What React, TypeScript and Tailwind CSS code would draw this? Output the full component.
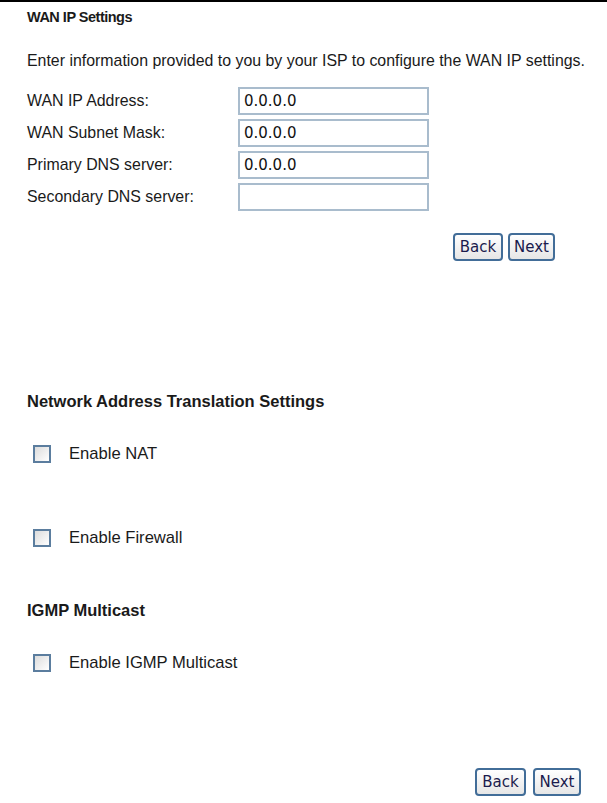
import React from 'react';

const fields = [
  { label: 'WAN IP Address:', value: '0.0.0.0' },
  { label: 'WAN Subnet Mask:', value: '0.0.0.0' },
  { label: 'Primary DNS server:', value: '0.0.0.0' },
  { label: 'Secondary DNS server:', value: '' },
];

const Btn = ({ children, w }: { children: React.ReactNode; w: string }) => (
  <button
    className={`${w} h-[28px] border-2 border-[#426d98] rounded-[4px] bg-gradient-to-b from-white to-[#e6e6e6] text-[#1b1b4d] text-[15px] font-[family-name:'DejaVu_Sans',sans-serif] leading-none`}
  >
    {children}
  </button>
);

const Check = ({ label }: { label: string }) => (
  <div className="flex items-center h-[18px]">
    <span className="ml-[6px] w-[18px] h-[18px] border-2 border-[#5b7d9e] bg-gradient-to-br from-[#dcdcdc] to-white" />
    <span className="ml-[18px] text-[16.6px] leading-[18px] text-[#1a1a1a]">{label}</span>
  </div>
);

const App = () => {
  return (
    <div className="w-[607px] h-[803px] bg-white border-t-2 border-black font-[family-name:'Liberation_Sans',Arial,sans-serif] text-[#1a1a1a] overflow-hidden">
      <div className="pl-[27px]">
        <h2 className="pt-[7px] text-[14.5px] leading-[16px] font-bold tracking-[-0.5px]">WAN IP Settings</h2>
        <p className="mt-[27px] text-[15.9px] leading-[17px]">
          Enter information provided to you by your ISP to configure the WAN IP settings.
        </p>

        <div className="mt-[18px] flex flex-col gap-[4px]">
          {fields.map((f) => (
            <div key={f.label} className="flex items-center h-[28px]">
              <span className="w-[211px] text-[15.9px]">{f.label}</span>
              <div className="w-[191px] h-[28px] border-2 border-[#a9bccd] flex items-center pl-[4px] text-[15px] font-[family-name:'DejaVu_Sans',sans-serif] text-[#111]">
                {f.value}
              </div>
            </div>
          ))}
        </div>

        <div className="mt-[22px] flex gap-[5px] pl-[426px]">
          <Btn w="w-[50px]">Back</Btn>
          <Btn w="w-[47px]">Next</Btn>
        </div>

        <h2 className="mt-[132px] text-[16.5px] leading-[17px] font-bold">
          Network Address Translation Settings
        </h2>
        <div className="mt-[35px]">
          <Check label="Enable NAT" />
        </div>
        <div className="mt-[66px]">
          <Check label="Enable Firewall" />
        </div>

        <h2 className="mt-[55px] text-[16.5px] leading-[17px] font-bold">IGMP Multicast</h2>
        <div className="mt-[35px]">
          <Check label="Enable IGMP Multicast" />
        </div>

        <div className="mt-[96px] flex gap-[7px] pl-[448px]">
          <Btn w="w-[51px]">Back</Btn>
          <Btn w="w-[48px]">Next</Btn>
        </div>
      </div>
    </div>
  );
};

export default App;
